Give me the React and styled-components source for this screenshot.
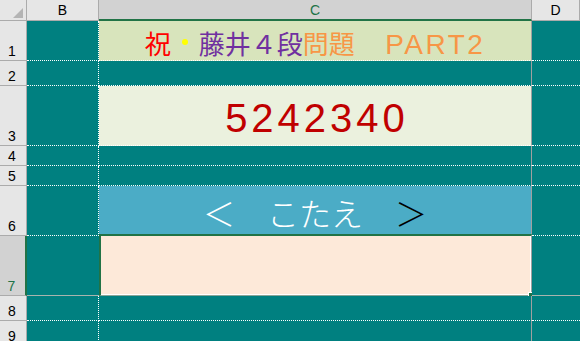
import styled, { createGlobalStyle } from "styled-components";

const GlobalStyle = createGlobalStyle`
  html, body {
    margin: 0;
    padding: 0;
    background: #ffffff;
    overflow: hidden;
  }
`

const Sheet = styled.div`
  display: grid;
  grid-template-columns: 27px 72px 433px 48px;
  grid-auto-rows: auto;
  width: 580px;
  height: 341px;
  overflow: hidden;
  font-family: "Liberation Sans", "Noto Sans CJK JP", sans-serif;
`

const Corner = styled.div`
  height: 21px;
  box-sizing: border-box;
  background: #e6e6e6;
  border-right: 1px solid #ababab;
  border-bottom: 1px solid #ababab;
  display: flex;
  align-items: flex-end;
  justify-content: flex-end;
  padding: 0 3px 2px 0;
`

const ColHead = styled.div`
  height: 21px;
  box-sizing: border-box;
  background: ${(p) => (p.$selected ? "#d2d2d2" : "#e6e6e6")};
  border-right: 1px solid #ababab;
  border-bottom: ${(p) => (p.$selected ? "2px solid #217346" : "1px solid #ababab")};
  display: flex;
  align-items: center;
  justify-content: center;
  font-size: 14px;
  color: ${(p) => (p.$selected ? "#217346" : "#000")};
  padding-top: ${(p) => (p.$selected ? "1px" : "0")};
`

const RowHead = styled.div`
  height: ${(p) => p.$h}px;
  box-sizing: border-box;
  background: ${(p) => (p.$selected ? "#d2d2d2" : "#e6e6e6")};
  border-right: ${(p) => (p.$selected ? "2px solid #217346" : "1px solid #ababab")};
  border-bottom: 1px solid #ababab;
  display: flex;
  align-items: flex-end;
  justify-content: center;
  padding: 0 2px 1px 0;
  font-size: 14px;
  line-height: 16px;
  color: ${(p) => (p.$selected ? "#217346" : "#000")};
`

const Cell = styled.div`
  position: relative;
  height: ${(p) => p.$h}px;
  box-sizing: border-box;
  background: ${(p) => p.$fill || "#008080"};
  border-right: ${(p) => p.$right || "none"};
  border-bottom: ${(p) => p.$bottom || "1px dotted #ffffff"};
  display: flex;
  align-items: center;
  justify-content: center;
  white-space: pre;
`

const SelectedCell = styled(Cell)`
  border-top: 2px solid #217346;
  border-left: 2px solid #217346;
  border-bottom: 1px solid #8aa596;
  box-shadow: inset -1px -1px 0 #ffffff;
  margin-top: -2px;
  height: ${(p) => p.$h + 2}px;
`

const FillHandle = styled.span`
  position: absolute;
  right: -3px;
  bottom: -3px;
  width: 4px;
  height: 4px;
  background: #217346;
  border: 1px solid #ffffff;
`

const Title = styled.div`
  font-family: "Liberation Sans", "Noto Sans CJK JP", sans-serif;
  font-size: 26px;
  padding: 3px 0 0 0;
  display: flex;
  align-items: center;
`

const Part = styled.span`
  color: ${(p) => p.$color};
  font-size: ${(p) => p.$size || 26}px;
  letter-spacing: ${(p) => p.$spacing || 0}px;
`

const Dot = styled.span`
  display: inline-block;
  width: 6px;
  height: 6px;
  border-radius: 50%;
  background: #ffff00;
  margin: 0 11px 0 11px;
`

const BigNumber = styled.div`
  font-family: "Liberation Sans", sans-serif;
  font-size: 40px;
  letter-spacing: 4px;
  color: #c00000;
  padding: 5px 0 0 4px;
`

const Answer = styled.div`
  font-family: "Noto Sans CJK JP", sans-serif;
  font-weight: 300;
  font-size: 32px;
  color: #ffffff;
  padding-top: 2px;
`

const Dark = styled.span`
  color: #000000;
`

const TriangleIcon = () => (
  <svg width="10" height="10" viewBox="0 0 10 10">
    <polygon points="10,0 10,10 0,10" fill="#b4b4b4" />
  </svg>
)

const TitleText = () => (
  <Title>
    <Part $color="#ff0000">祝</Part>
    <Dot />
    <Part $color="#7030a0">藤井４段</Part>
    <Part $color="#f79646">問題</Part>
    <Part $color="#f79646" $size={28} $spacing={2.5}>{"　PART2"}</Part>
  </Title>
)

const rows = [
  { n: 1, h: 40, fill: "#d8e4bc", content: <TitleText /> },
  { n: 2, h: 25 },
  { n: 3, h: 60, fill: "#ebf1de", content: <BigNumber>5242340</BigNumber> },
  { n: 4, h: 20 },
  { n: 5, h: 20 },
  {
    n: 6,
    h: 50,
    fill: "#4bacc6",
    content: (
      <Answer>
        {"＜　こたえ　"}
        <Dark>＞</Dark>
      </Answer>
    ),
  },
  { n: 7, h: 60, fill: "#fde9d9", selected: true },
  { n: 8, h: 25 },
  { n: 9, h: 25 },
]

const App = () => {
  return (
    <>
      <GlobalStyle />
      <Sheet>
        <Corner>
          <TriangleIcon />
        </Corner>
        <ColHead>B</ColHead>
        <ColHead $selected>C</ColHead>
        <ColHead>D</ColHead>

        {rows.map((row) => {
          const bottom = row.selected ? "1px solid #a8b4ae" : undefined
          return [
            <RowHead key={`h${row.n}`} $h={row.h} $selected={row.selected}>
              {row.n}
            </RowHead>,
            <Cell
              key={`b${row.n}`}
              $h={row.h}
              $right={row.selected ? "none" : "1px dotted #ffffff"}
              $bottom={bottom}
            />,
            row.selected ? (
              <SelectedCell
                key={`c${row.n}`}
                $h={row.h}
                $fill={row.fill}
                $right="1px solid #a0a0a0"
              >
                <FillHandle />
              </SelectedCell>
            ) : (
              <Cell
                key={`c${row.n}`}
                $h={row.h}
                $fill={row.fill}
                $right="1px solid #a0a0a0"
              >
                {row.content}
              </Cell>
            ),
            <Cell key={`d${row.n}`} $h={row.h} $bottom={bottom} />,
          ]
        })}
      </Sheet>
    </>
  )
}

export default App
